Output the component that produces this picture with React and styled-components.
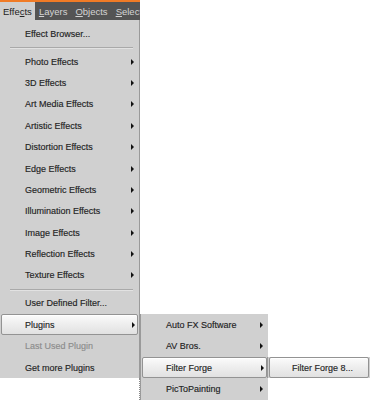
import React from "react";
import styled, { createGlobalStyle } from "styled-components";

const Global = createGlobalStyle`
  html, body { margin: 0; padding: 0; background: #ffffff; }
  body { font-family: "Liberation Sans", Arial, sans-serif; min-height: 400px; }
`;

const Wrap = styled.div`
  width: 140px;
  min-height: 400px;
  display: flex;
  flex-direction: column;
  position: relative;
`;

const MenuBar = styled.div`
  height: 18px;
  border-top: 2px solid #f07b26;
  background: #545454;
  display: flex;
  align-items: stretch;
  overflow: hidden;
  white-space: nowrap;
`;

const BarItem = styled.div`
  padding: 0 ${(p) => (p.$active ? "3px" : "4px")} 0 ${(p) => (p.$active ? "3px" : "4px")};
  display: flex;
  align-items: center;
  font-size: 9.5px;
  color: ${(p) => (p.$active ? "#222" : "#d4d4d4")};
  background: ${(p) => (p.$active ? "#cfcfcf" : "transparent")};
  u { text-decoration: underline; text-underline-offset: 1px; }
`;

const Panel = styled.div`
  background: #d0d0d0;
  border-right: 1px solid #9a9a9a;
  padding: 3px 0 0 0;
  height: 358px;
  box-sizing: border-box;
  display: flex;
  flex-direction: column;
  position: relative;
`;

const Item = styled.div`
  position: relative;
  height: 21.4px;
  flex: none;
  box-sizing: border-box;
  display: flex;
  align-items: center;
  padding-left: ${(p) => p.$indent ?? 23}px;
  justify-content: ${(p) => (p.$center ? "center" : "flex-start")};
  font-size: 9px;
  color: ${(p) => (p.$disabled ? "#8c8c8c" : "#1f1f1f")};
  white-space: nowrap;
  margin: 0 1px 0 1px;
  border: 1px solid ${(p) => (p.$hl ? "#939393" : "transparent")};
  border-radius: 2px;
  background: ${(p) =>
    p.$hl ? "linear-gradient(#fbfbfb, #ececec 55%, #e1e1e1)" : "transparent"};
  box-shadow: ${(p) => (p.$hl ? "inset 0 1px 0 #ffffff" : "none")};
  -webkit-text-stroke: 0.15px currentColor;
`;

const Arrow = styled.span`
  position: absolute;
  right: ${(p) => p.$right ?? 3}px;
  top: 50%;
  margin-top: -3px;
  width: 0;
  height: 0;
  border-top: 3px solid transparent;
  border-bottom: 3px solid transparent;
  border-left: 3px solid #111;
`;

const Sep = styled.div`
  height: 6.5px;
  flex: none;
  display: flex;
  align-items: center;
  padding: 0 6px 0 10px;
  &::after {
    content: "";
    flex: 1;
    height: 1px;
    background: #a9a9a9;
    box-shadow: 0 1px 0 #e2e2e2;
  }
`;

const SubMenu = styled.div`
  position: absolute;
  left: ${(p) => p.$left}px;
  top: -1px;
  width: ${(p) => p.$width}px;
  background: #d0d0d0;
  border-left: 1px solid #9a9a9a;
  display: flex;
  flex-direction: column;
  z-index: ${(p) => p.$z ?? 2};
`;

const Dotted = styled.div`
  position: absolute;
  left: 139px;
  top: 378px;
  width: 1px;
  height: 30px;
  border-left: 1px dotted #8a8a8a;
`;

const mainItems = [
  "Photo Effects",
  "3D Effects",
  "Art Media Effects",
  "Artistic Effects",
  "Distortion Effects",
  "Edge Effects",
  "Geometric Effects",
  "Illumination Effects",
  "Image Effects",
  "Reflection Effects",
  "Texture Effects",
];

export default function App() {
  return (
    <>
      <Global />
      <Wrap>
        <MenuBar>
          <BarItem $active>
            <span>
              Effe<u>c</u>ts
            </span>
          </BarItem>
          <BarItem>
            <span>
              <u>L</u>ayers
            </span>
          </BarItem>
          <BarItem>
            <span>
              <u>O</u>bjects
            </span>
          </BarItem>
          <BarItem>
            <span>
              <u>S</u>elect
            </span>
          </BarItem>
        </MenuBar>
        <Panel>
          <Item>Effect Browser...</Item>
          <Sep />
          {mainItems.map((t) => (
            <Item key={t}>
              {t}
              <Arrow />
            </Item>
          ))}
          <Sep />
          <Item>User Defined Filter...</Item>
          <Item $hl>
            Plugins
            <Arrow $right={2} />
            <SubMenu $left={138} $width={127}>
              <Item>
                Auto FX Software
                <Arrow />
              </Item>
              <Item>
                AV Bros.
                <Arrow />
              </Item>
              <Item $hl>
                Filter Forge
                <Arrow $right={2} />
                <SubMenu $left={124} $width={102} $z={3}>
                  <Item $hl $indent={7} $center>
                    Filter Forge 8...
                  </Item>
                </SubMenu>
              </Item>
              <Item>
                PicToPainting
                <Arrow />
              </Item>
            </SubMenu>
          </Item>
          <Item $disabled>Last Used Plugin</Item>
          <Item>Get more Plugins</Item>
        </Panel>
        <Dotted />
      </Wrap>
    </>
  );
}
